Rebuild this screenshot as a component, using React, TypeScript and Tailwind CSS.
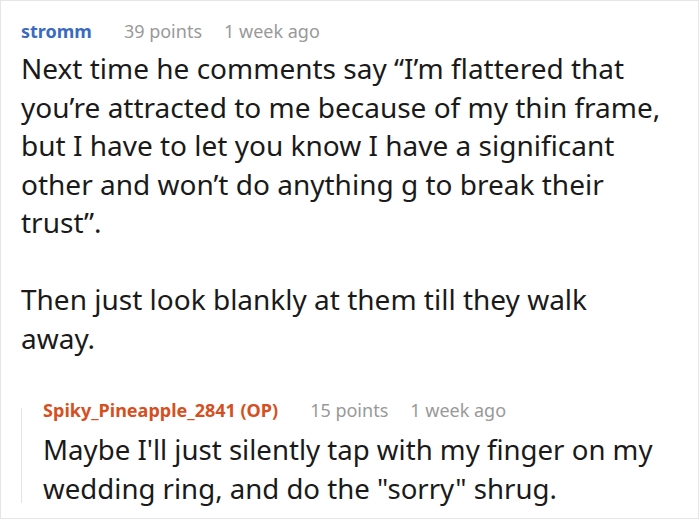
export default function App() {
  return (
    <div className="w-[700px] h-[520px] bg-white" style={{ fontFamily: '"Noto Sans", "Open Sans", sans-serif' }}>
      <div className="w-[699px] h-[519px] border border-[#e6e6e6] pl-[20px] pr-[35px] pt-[17px]">
        <div className="flex items-center h-[26px] text-[18px] whitespace-nowrap">
          <span className="font-bold text-[#3a6bc1]">stromm</span>
          <span className="ml-[32px] text-[#999999]">39 points</span>
          <span className="ml-[22px] text-[#999999]">1 week ago</span>
        </div>
        <div className="text-[28px] leading-[38.5px] text-[#1a1a1a] mt-[5px]">
          <p>Next time he comments say “I’m flattered that you’re attracted to me because of my thin frame, but I have to let you know I have a significant other and won’t do anything g to break their trust”.</p>
          <p className="mt-[38.5px]">Then just look blankly at them till they walk away.</p>
        </div>
        <div className="mt-[40px] flex">
          <div className="w-[2px] bg-[#e4e4e4] mt-[11px] mb-[4px]" />
          <div className="pl-[21px]">
            <div className="flex items-center h-[26px] text-[18px] whitespace-nowrap">
              <span className="font-bold text-[#d5501f]">Spiky_Pineapple_2841 (OP)</span>
              <span className="ml-[32px] text-[#999999]">15 points</span>
              <span className="ml-[22px] text-[#999999]">1 week ago</span>
            </div>
            <div className="text-[27.6px] leading-[38.5px] text-[#1a1a1a] mt-[7px]">
              <p>Maybe I'll just silently tap with my finger on my wedding ring, and do the "sorry" shrug.</p>
            </div>
          </div>
        </div>
      </div>
    </div>
  );
}
